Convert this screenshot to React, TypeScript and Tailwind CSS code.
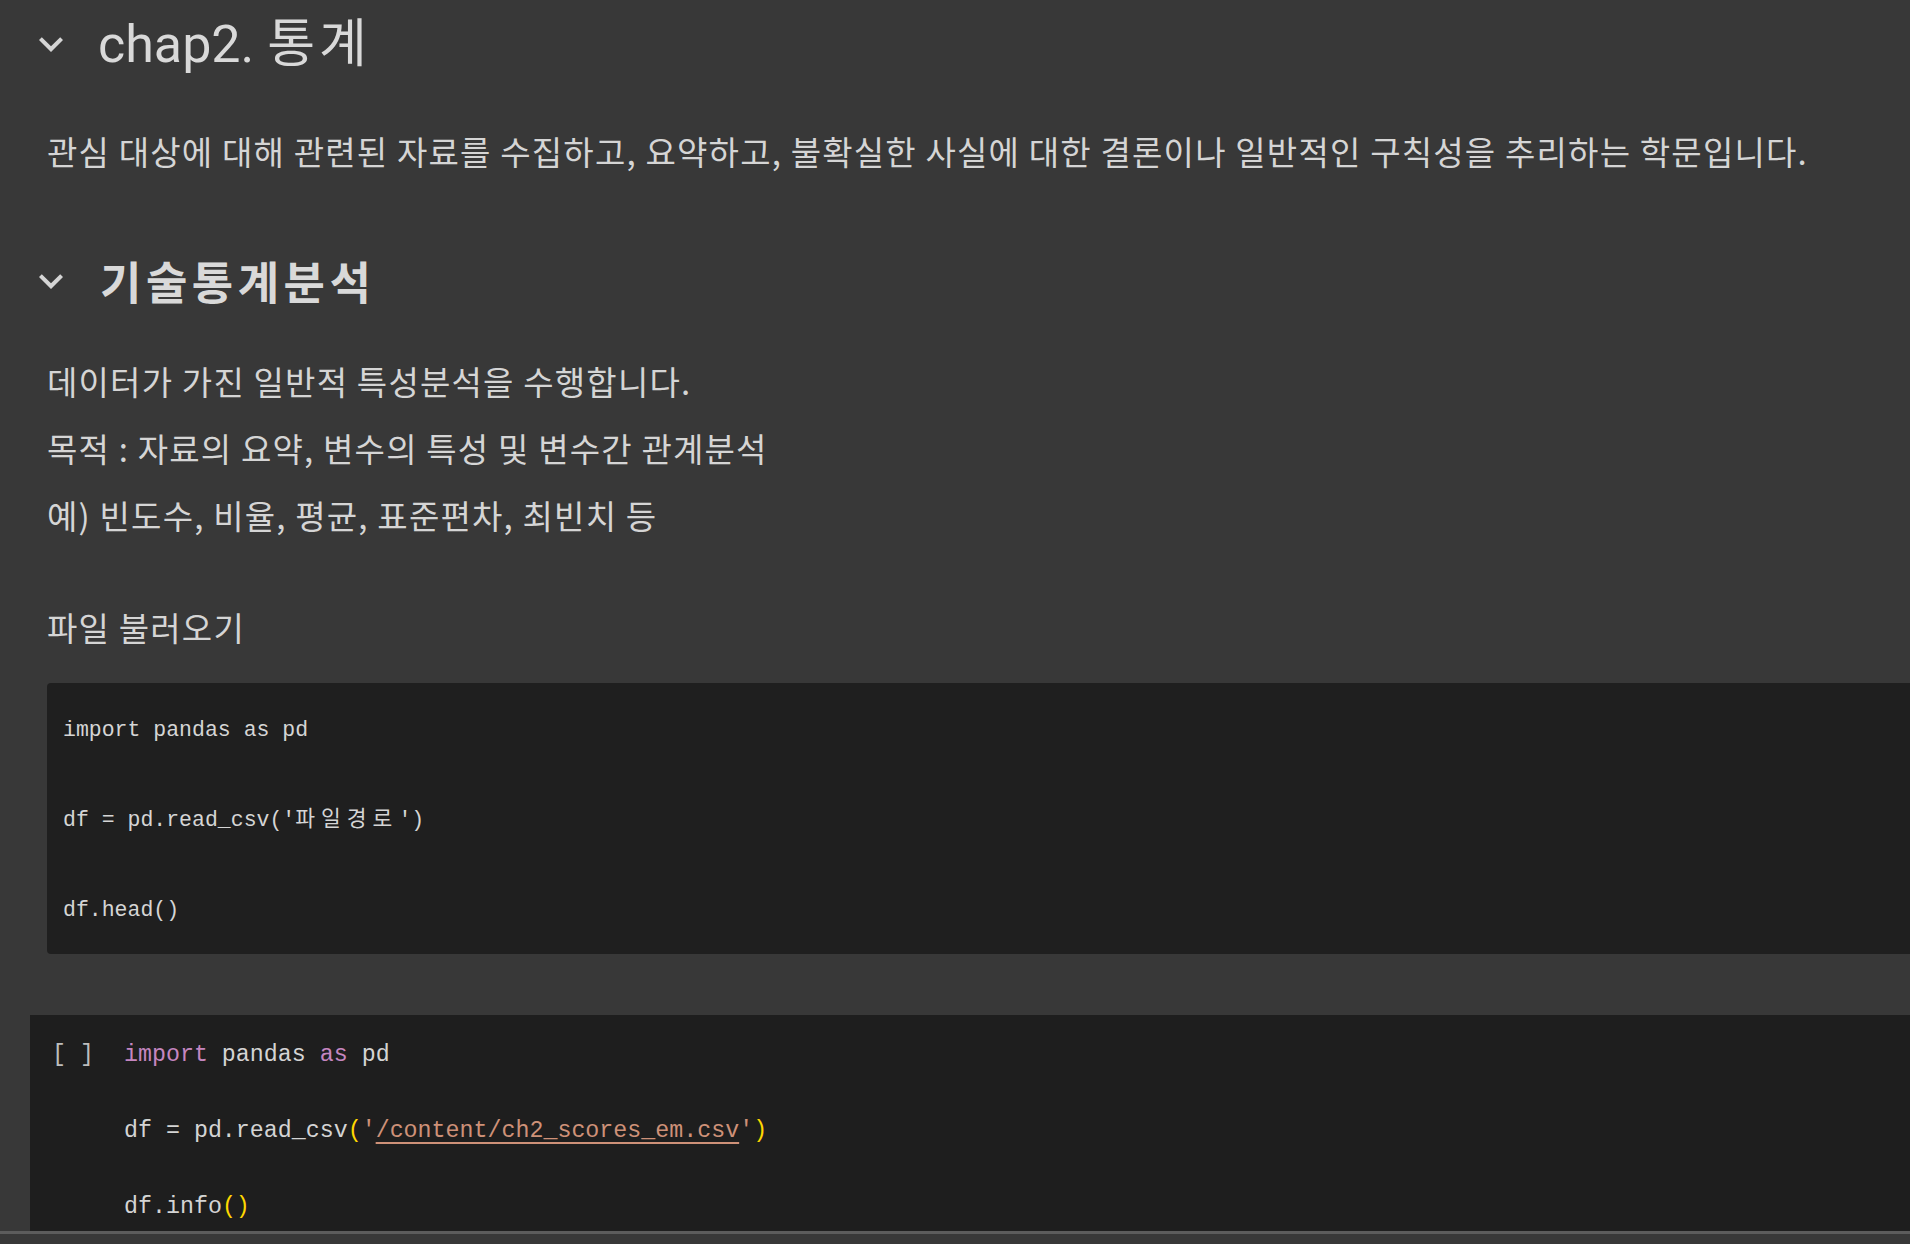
import React from "react";

// Material "expand_more" chevron used by the collapsible section headers
const Chevron = () => (
  <svg width="48" height="48" viewBox="0 0 24 24" className="shrink-0 fill-[#d5d5d5]">
    <path d="M16.59 8.59L12 13.17 7.41 8.59 6 10l6 6 6-6z" />
  </svg>
);

const kr = "font-['Noto_Sans_CJK_KR',sans-serif]";

const Line = ({ children, className = "" }: { children: React.ReactNode; className?: string }) => (
  <p
    className={`${kr} pl-[47px] text-[33px] leading-[48px] tracking-[1.2px] text-[#d5d5d5] whitespace-nowrap ${className}`}
  >
    {children}
  </p>
);

// markdown fenced code, plain colour
const codeLines: React.ReactNode[] = [
  "import pandas as pd",
  <>
    df = pd.read_csv('<span className="tracking-[6px]">파일경로</span>')
  </>,
  "df.head()",
];

export default function App() {
  return (
    <div className="h-[1244px] w-full overflow-hidden bg-[#383838]">
      {/* chap2 header */}
      <div className="flex h-[88px] items-center pl-[27px]">
        <Chevron />
        <h1 className="ml-[23px] font-['Roboto','Noto_Sans_CJK_KR',sans-serif] text-[52px] font-normal leading-[61px] text-[#d9d9d9]">
          chap2. <span className="tracking-[4px]">통계</span>
        </h1>
      </div>

      <Line className="mt-[39px]">
        관심 대상에 대해 관련된 자료를 수집하고, 요약하고, 불확실한 사실에 대한 결론이나 일반적인 구칙성을 추리하는 학문입니다.
      </Line>

      <div className="mt-[76px] flex items-center pl-[27px]">
        <Chevron />
        <h2 className={`${kr} ml-[25px] text-[45px] font-bold leading-[60px] tracking-[4.5px] text-[#d9d9d9]`}>
          기술통계분석
        </h2>
      </div>

      <div className="mt-[46px] flex flex-col gap-[19px]">
        <Line>데이터가 가진 일반적 특성분석을 수행합니다.</Line>
        <Line>목적 : 자료의 요약, 변수의 특성 및 변수간 관계분석</Line>
        <Line>예) 빈도수, 비율, 평균, 표준편차, 최빈치 등</Line>
      </div>

      <Line className="mt-[64px]">파일 불러오기</Line>

      {/* markdown code block */}
      <div className="ml-[47px] mt-[32px] flex h-[271px] flex-col gap-[60px] rounded-l-[4px] bg-[#1f1f1f] pl-[16px] pt-[32px]">
        {codeLines.map((l, i) => (
          <div
            key={i}
            className="whitespace-pre font-['Liberation_Mono','Noto_Sans_CJK_KR',monospace] text-[21.5px] leading-[30px] text-[#d5d5d5]"
          >
            {l}
          </div>
        ))}
      </div>

      {/* code cell */}
      <div className="ml-[30px] mt-[61px] flex h-[216px] bg-[#1e1e1e] pt-[24px] font-['Liberation_Mono',monospace] text-[23.3px] leading-[32px] text-[#d4d4d4]">
        <div className="w-[94px] shrink-0 pl-[22px] whitespace-pre text-[#bdbdbd]">[ ]</div>
        <div className="flex flex-col gap-[44px] whitespace-pre">
          <div>
            <span className="text-[#c586c0]">import</span> pandas <span className="text-[#c586c0]">as</span> pd
          </div>
          <div>
            df = pd.read_csv<span className="text-[#ffd700]">(</span>
            <span className="text-[#ce9178]">
              '<span className="underline decoration-[#ce9178] underline-offset-[5px]">/content/ch2_scores_em.csv</span>'
            </span>
            <span className="text-[#ffd700]">)</span>
          </div>
          <div>
            df.info<span className="text-[#ffd700]">()</span>
          </div>
        </div>
      </div>
      <div className="h-[3px] bg-[#5c5c5c]" />
    </div>
  );
}
